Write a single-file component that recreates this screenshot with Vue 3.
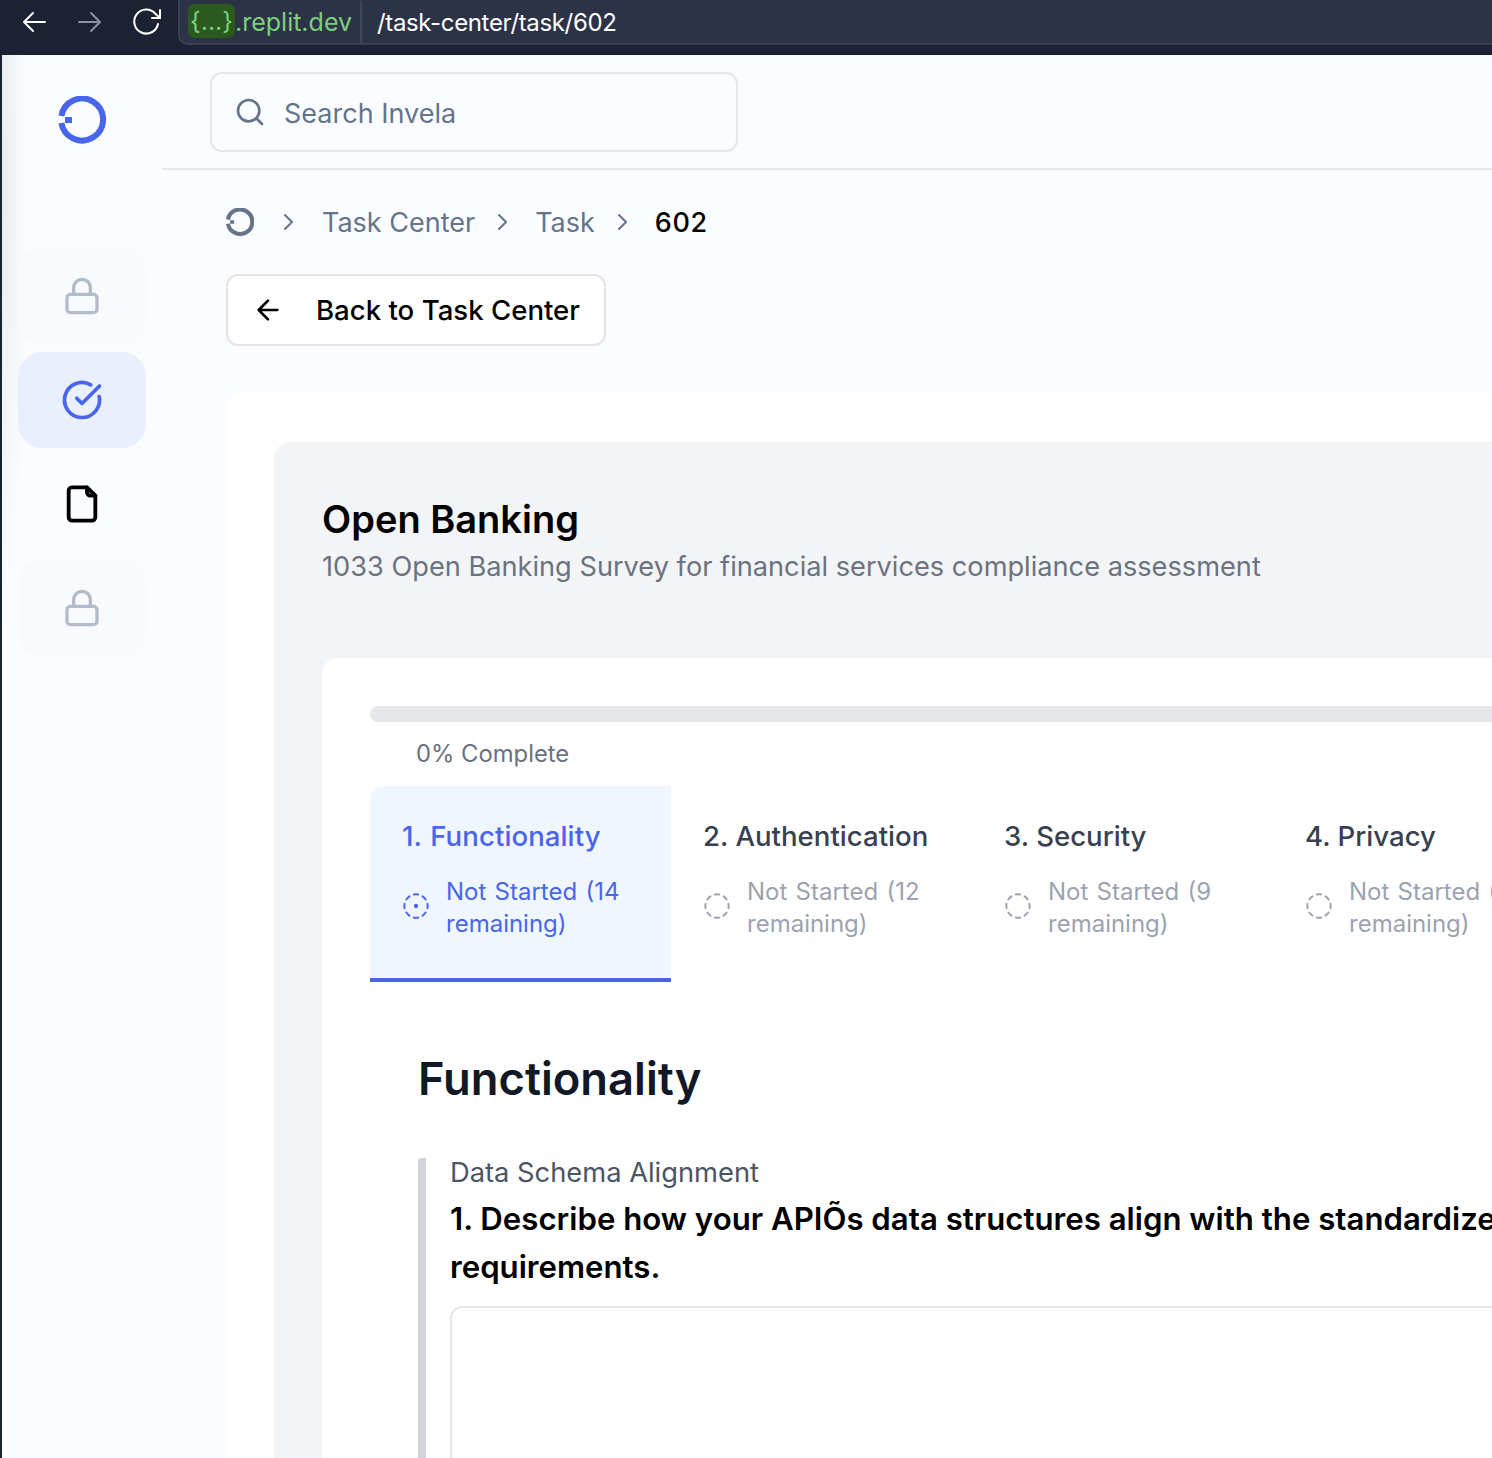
<script setup>
const tabs = [
  { title: "1. Functionality", status: "Not Started (14 remaining)", active: true },
  { title: "2. Authentication", status: "Not Started (12 remaining)", active: false },
  { title: "3. Security", status: "Not Started (9 remaining)", active: false },
  { title: "4. Privacy", status: "Not Started (8 remaining)", active: false },
];

const dashes = [
  "M10.1 2.182a10 10 0 0 1 3.8 0",
  "M13.9 21.818a10 10 0 0 1-3.8 0",
  "M17.609 3.721a10 10 0 0 1 2.69 2.7",
  "M2.182 13.9a10 10 0 0 1 0-3.8",
  "M20.279 17.609a10 10 0 0 1-2.7 2.69",
  "M21.818 10.1a10 10 0 0 1 0 3.8",
  "M3.721 6.391a10 10 0 0 1 2.7-2.69",
  "M6.391 20.279a10 10 0 0 1-2.69-2.7",
];
</script>

<template>
  <div class="page">
    <header class="browser">
      <div class="browser__nav">
        <svg width="24" height="24" viewBox="0 0 24 24" fill="none" stroke="#fff" stroke-width="2" stroke-linecap="round" stroke-linejoin="round">
          <path d="M23 12H2M11 3l-9 9 9 9" />
        </svg>
        <svg width="24" height="24" viewBox="0 0 24 24" fill="none" stroke="#8d919c" stroke-width="2" stroke-linecap="round" stroke-linejoin="round">
          <path d="M1 12h21M13 3l9 9-9 9" />
        </svg>
        <svg width="32" height="28" viewBox="0 0 32 28" fill="none" stroke="#fff" stroke-width="2" stroke-linecap="round" stroke-linejoin="round">
          <path d="M27 16a12 12 0 1 1-2.6-10.2L29 10" />
          <path d="M29 2v8h-8" />
        </svg>
      </div>
      <div class="browser__url">
        <div class="browser__host"><span class="browser__chip">{...}</span>.replit.dev</div>
        <div class="browser__path">/task-center/task/602</div>
      </div>
    </header>

    <div class="shell">
      <aside class="sidebar">
        <svg class="sidebar__logo" width="48" height="48" viewBox="0 0 48 48" fill="none">
          <path d="M3.4 20A21 21 0 1 1 3.4 27" stroke="#4965ec" stroke-width="6" />
          <rect x="7" y="21" width="7" height="6" fill="#4965ec" />
        </svg>
        <nav class="sidebar__nav">
          <div class="tile tile--locked">
            <svg width="40" height="40" viewBox="0 0 24 24" fill="none" stroke="#b4bccb" stroke-width="2" stroke-linecap="round" stroke-linejoin="round">
              <rect x="3" y="11" width="18" height="11" rx="2" />
              <path d="M7 11V7a5 5 0 0 1 10 0v4" />
            </svg>
          </div>
          <div class="tile tile--active">
            <svg width="42" height="42" viewBox="0 0 24 24" fill="none" stroke="#4965ec" stroke-width="2.1" stroke-linecap="round" stroke-linejoin="round">
              <path d="M21.801 10A10 10 0 1 1 17 3.335" />
              <path d="m9 11 3 3L22 4" />
            </svg>
          </div>
          <div class="tile">
            <svg width="40" height="40" viewBox="0 0 24 24" fill="none" stroke="#000" stroke-width="2.3" stroke-linecap="round" stroke-linejoin="round">
              <path d="M15 2H6a2 2 0 0 0-2 2v16a2 2 0 0 0 2 2h12a2 2 0 0 0 2-2V7Z" />
              <path d="M15 2v3a2 2 0 0 0 2 2h3" />
            </svg>
          </div>
          <div class="tile tile--locked">
            <svg width="40" height="40" viewBox="0 0 24 24" fill="none" stroke="#b4bccb" stroke-width="2" stroke-linecap="round" stroke-linejoin="round">
              <rect x="3" y="11" width="18" height="11" rx="2" />
              <path d="M7 11V7a5 5 0 0 1 10 0v4" />
            </svg>
          </div>
        </nav>
      </aside>

      <div class="main">
        <div class="topbar">
          <div class="search">
            <svg width="32" height="32" viewBox="0 0 24 24" fill="none" stroke="#64748b" stroke-width="2" stroke-linecap="round" stroke-linejoin="round">
              <circle cx="11" cy="11" r="8" />
              <path d="m21 21-4.3-4.3" />
            </svg>
            <span>Search Invela</span>
          </div>
        </div>

        <div class="content">
          <div class="crumbs">
            <svg width="28" height="28" viewBox="0 0 48 48" fill="none">
              <path d="M3.4 20A21 21 0 1 1 3.4 27" stroke="#64748b" stroke-width="7" />
              <rect x="7" y="21" width="7" height="6" fill="#64748b" />
            </svg>
            <svg class="crumbs__sep crumbs__sep--first" width="24" height="24" viewBox="0 0 24 24" fill="none" stroke="#64748b" stroke-width="2" stroke-linecap="round" stroke-linejoin="round">
              <path d="m9 5 7 7-7 7" />
            </svg>
            <span class="crumbs__link">Task Center</span>
            <svg class="crumbs__sep crumbs__sep--tight" width="24" height="24" viewBox="0 0 24 24" fill="none" stroke="#64748b" stroke-width="2" stroke-linecap="round" stroke-linejoin="round">
              <path d="m9 5 7 7-7 7" />
            </svg>
            <span class="crumbs__link">Task</span>
            <svg class="crumbs__sep crumbs__sep--tight" width="24" height="24" viewBox="0 0 24 24" fill="none" stroke="#64748b" stroke-width="2" stroke-linecap="round" stroke-linejoin="round">
              <path d="m9 5 7 7-7 7" />
            </svg>
            <span class="crumbs__current">602</span>
          </div>

          <button type="button" class="back">
            <svg width="32" height="32" viewBox="0 0 24 24" fill="none" stroke="#000" stroke-width="2" stroke-linecap="round" stroke-linejoin="round">
              <path d="M19 12H5M12 19l-7-7 7-7" />
            </svg>
            <span>Back to Task Center</span>
          </button>

          <section class="outer">
            <div class="panel">
              <h1 class="panel__title">Open Banking</h1>
              <p class="panel__sub">1033 Open Banking Survey for financial services compliance assessment</p>

              <div class="form">
                <div class="progress"></div>
                <div class="progress__label">0% Complete</div>

                <div class="tabs">
                  <div v-for="tab in tabs" :key="tab.title" class="tab" :class="{ 'tab--active': tab.active }">
                    <div class="tab__title">{{ tab.title }}</div>
                    <div class="tab__status">
                      <svg width="28" height="28" viewBox="0 0 24 24" fill="none" stroke="currentColor" stroke-width="1.7" stroke-linecap="round" stroke-linejoin="round">
                        <path v-for="d in dashes" :key="d" :d="d" />
                        <circle v-if="tab.active" cx="12" cy="12" r="1" fill="currentColor" />
                      </svg>
                      <span>{{ tab.status }}</span>
                    </div>
                  </div>
                </div>

                <h2 class="form__heading">Functionality</h2>

                <div class="question">
                  <div class="question__group">Data Schema Alignment</div>
                  <div class="question__text">1. Describe how your APIÕs data structures align with the standardized data model requirements.</div>
                  <div class="question__input"></div>
                </div>
              </div>
            </div>
          </section>
        </div>
      </div>
    </div>
  </div>
</template>

<style>
html,
body {
  margin: 0;
  background: #fbfcff;
  overflow: hidden;
}
</style>

<style scoped>
.page {
  width: 1492px;
  height: 1458px;
  overflow: hidden;
  font-family: Inter, "Liberation Sans", sans-serif;
  background: #fbfcff;
  display: flex;
  flex-direction: column;
}

.browser {
  flex: none;
  height: 55px;
  box-sizing: border-box;
  background: #1c2233;
  display: flex;
  align-items: flex-start;
}

.browser__nav {
  width: 178px;
  flex: none;
  box-sizing: border-box;
  height: 44px;
  padding-left: 22px;
  display: flex;
  align-items: center;
  gap: 32px;
}

.browser__nav svg:last-child {
  margin-left: -3px;
}

.browser__url {
  flex: 1;
  height: 45px;
  box-sizing: border-box;
  padding-top: 1px;
  background: #2d3347;
  border: 2px solid #3a4054;
  border-top: 0;
  border-right: 0;
  border-radius: 0 0 0 10px;
  display: flex;
  align-items: center;
}

.browser__host {
  flex: none;
  width: 182px;
  height: 100%;
  box-sizing: border-box;
  padding-left: 8px;
  border-right: 2px solid #3f4559;
  font-size: 25px;
  color: #7bd07c;
  display: flex;
  align-items: center;
}

.browser__chip {
  flex: none;
  background: #2a5a20;
  border-radius: 7px;
  height: 34px;
  line-height: 34px;
  width: 47px;
  text-align: center;
  margin-top: -2px;
}

.browser__path {
  padding-left: 15px;
  font-size: 24px;
  letter-spacing: -0.35px;
  color: #fff;
}

.shell {
  flex: 1;
  min-height: 0;
  display: flex;
  border-left: 2px solid #1a2133;
}

.sidebar {
  flex: none;
  width: 160px;
  box-sizing: border-box;
  padding: 41px 16px 0;
  display: flex;
  flex-direction: column;
  align-items: center;
  background: radial-gradient(ellipse 24px 460px at 0 120px, #e9ebef, rgba(251, 252, 255, 0));
}

.sidebar__logo {
  flex: none;
}

.sidebar__nav {
  margin-top: 104px;
  width: 100%;
  display: flex;
  flex-direction: column;
  gap: 8px;
}

.tile {
  height: 96px;
  border-radius: 24px;
  display: flex;
  align-items: center;
  justify-content: center;
}

.tile--locked {
  background: #f9fafe;
}

.tile--active {
  background: #eaeffd;
}

.main {
  flex: 1;
  min-width: 0;
  display: flex;
  flex-direction: column;
}

.topbar {
  flex: none;
  height: 115px;
  box-sizing: border-box;
  padding: 17px 48px 0;
  border-bottom: 2px solid #e5e7eb;
}

.search {
  width: 528px;
  height: 80px;
  box-sizing: border-box;
  border: 2px solid #e2e8f0;
  border-radius: 12px;
  padding: 2px 0 0 22px;
  display: flex;
  align-items: center;
  gap: 18px;
  font-size: 27px;
  color: #64748b;
}

.search svg {
  margin-top: -2px;
}

.content {
  flex: 1;
  min-height: 0;
  padding: 36px 0 0 64px;
}

.crumbs {
  height: 32px;
  display: flex;
  align-items: center;
  font-size: 27px;
  color: #64748b;
}

.crumbs__sep {
  margin: 0 22px 0 15px;
  flex: none;
}

.crumbs__sep--first {
  margin-left: 22px;
}

.crumbs__sep--tight {
  margin-right: 21px;
}

.crumbs__current {
  color: #000;
  font-weight: 500;
  letter-spacing: 0.6px;
}

.back {
  display: flex;
  align-items: center;
  gap: 32px;
  width: 380px;
  height: 72px;
  box-sizing: border-box;
  margin-top: 36px;
  padding: 0 0 0 24px;
  background: #fff;
  border: 2px solid #e4e4e7;
  border-radius: 12px;
  font-family: inherit;
  font-size: 27.6px;
  font-weight: 500;
  color: #000;
}

.outer {
  margin-top: 48px;
  width: 2400px;
  height: 1200px;
  box-sizing: border-box;
  padding: 48px;
  background: #fefeff;
  border-radius: 16px;
}

.panel {
  height: 1200px;
  box-sizing: border-box;
  padding: 49px 48px 48px;
  background: #f3f4f6;
  border-radius: 16px;
}

.panel__title {
  margin: 0;
  font-size: 38px;
  line-height: 56px;
  font-weight: 600;
  color: #000;
}

.panel__sub {
  margin: 0;
  font-size: 27.2px;
  line-height: 40px;
  color: #6b7280;
}

.form {
  margin-top: 71px;
  height: 1000px;
  box-sizing: border-box;
  padding: 48px;
  background: #fff;
  border-radius: 16px;
}

.progress {
  height: 16px;
  border-radius: 8px;
  background: #e5e7eb;
}

.progress__label {
  margin: 16px 0 16px 46px;
  font-size: 23.8px;
  line-height: 32px;
  color: #6b7280;
}

.tabs {
  display: flex;
}

.tab {
  flex: none;
  width: 301px;
  height: 196px;
  box-sizing: border-box;
  padding: 32px;
  border-bottom: 4px solid transparent;
}

.tab--active {
  background: #eff6ff;
  border-bottom-color: #4965e0;
  border-radius: 12px 0 0 0;
}

.tab__title {
  font-size: 27.6px;
  line-height: 36px;
  font-weight: 500;
  color: #374151;
}

.tab--active .tab__title {
  color: #4965ec;
  word-spacing: 1px;
  letter-spacing: 0.08px;
}

.tab__status {
  margin-top: 22px;
  display: flex;
  align-items: center;
  gap: 16px;
  font-size: 24px;
  line-height: 32px;
  word-spacing: 1.5px;
  color: #9ca3af;
}

.tab__status svg {
  flex: none;
  margin-top: -4px;
}

.tab--active .tab__status {
  color: #4965ec;
}

.form__heading {
  margin: 69px 0 0 48px;
  font-size: 45.3px;
  line-height: 56px;
  font-weight: 600;
  color: #111827;
}

.question {
  margin: 51px 0 0 48px;
  padding-left: 24px;
  border-left: 8px solid #d1d5db;
  border-radius: 4px 0 0 0;
}

.question__group {
  font-size: 27.3px;
  line-height: 30px;
  color: #4b5563;
}

.question__text {
  margin-top: 7px;
  max-width: 1350px;
  font-size: 31.2px;
  line-height: 48px;
  font-weight: 600;
  color: #000;
}

.question__input {
  margin-top: 15px;
  height: 400px;
  box-sizing: border-box;
  border: 2px solid #e5e7eb;
  border-radius: 12px;
  background: #fff;
}
</style>
